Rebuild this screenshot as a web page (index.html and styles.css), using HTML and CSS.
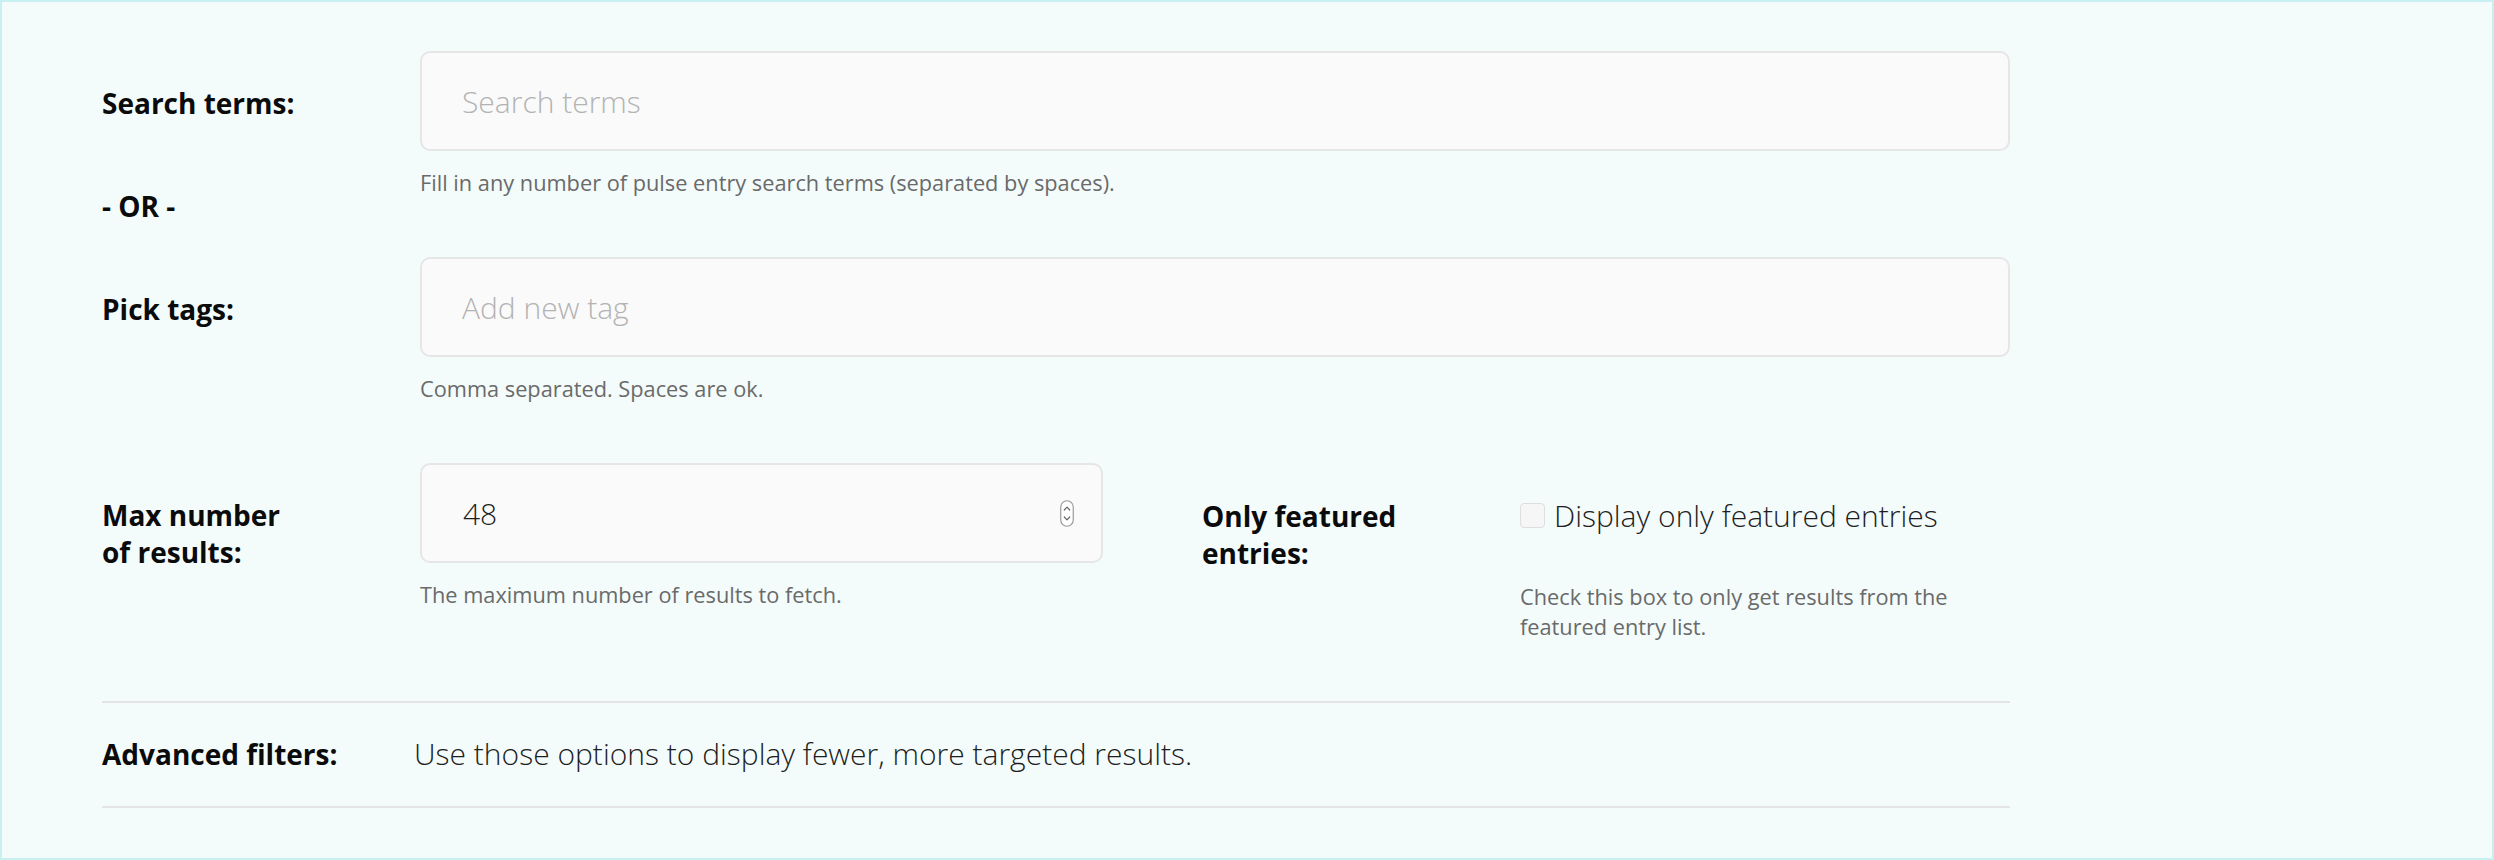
FILE: index.html
```html
<!DOCTYPE html>
<html lang="en">
<head>
<meta charset="utf-8">
<title>Pulse search</title>
<link rel="stylesheet" href="styles.css">
</head>
<body>
<div class="page">
  <form class="form">
    <div class="row">
      <div class="label-col">
        <div class="label">Search terms:</div>
        <div class="label or">- OR -</div>
      </div>
      <div class="field-col">
        <input class="input" type="text" placeholder="Search terms">
        <div class="help">Fill in any number of pulse entry search terms (separated by spaces).</div>
      </div>
    </div>
    <div class="row">
      <div class="label-col">
        <div class="label">Pick tags:</div>
      </div>
      <div class="field-col">
        <input class="input" type="text" placeholder="Add new tag">
        <div class="help">Comma separated. Spaces are ok.</div>
      </div>
    </div>
    <div class="row row-last">
      <div class="label-col">
        <div class="label">Max number<br>of results:</div>
      </div>
      <div class="field-half">
        <div class="numbox">
          <input class="num-input" type="text" value="48">
          <svg class="spinner" width="14" height="27" viewBox="0 0 14 27">
            <rect x="0.75" y="0.75" width="12.5" height="25.5" rx="6.25" fill="#ffffff" stroke="#9a9a9a" stroke-width="1.2"/>
            <path d="M4.3 10 L7 7.2 L9.7 10" fill="none" stroke="#666" stroke-width="1.2" stroke-linecap="round" stroke-linejoin="round"/>
            <path d="M4.3 17 L7 19.8 L9.7 17" fill="none" stroke="#666" stroke-width="1.2" stroke-linecap="round" stroke-linejoin="round"/>
          </svg>
        </div>
        <div class="help">The maximum number of results to fetch.</div>
      </div>
      <div class="label-col label-col-right">
        <div class="label">Only featured<br>entries:</div>
      </div>
      <div class="field-check">
        <label class="check-line"><span class="box"></span>Display only featured entries</label>
        <div class="help help-check">Check this box to only get results from the featured entry list.</div>
      </div>
    </div>
    <div class="adv">
      <div class="label adv-label">Advanced filters:</div>
      <div class="adv-text">Use those options to display fewer, more targeted results.</div>
    </div>
  </form>
</div>
</body>
</html>
```
FILE: styles.css
```css
* { box-sizing: border-box; }
html, body { margin: 0; padding: 0; }
body { font-family: "Open Sans", "Liberation Sans", sans-serif; }

.page {
  height: 860px;
  border: 2px solid #c8eff1;
  background: #f3fcfb;
  padding: 49px 0 0 100px;
  overflow: hidden;
}

.form { width: 1908px; }

.row {
  display: flex;
  align-items: flex-start;
  margin-bottom: 59px;
}

.label-col {
  width: 318px;
  flex: none;
  padding-top: 34px;
}
.label-col-right { margin-left: 99px; padding-top: 35px; }

.label {
  font-weight: 700;
  font-size: 28px;
  line-height: 37.44px;
  color: #0b0b0b;
}
.or { margin-top: 66px; margin-bottom: -300px; }

.field-col { flex: 1; }
.field-half { width: 683px; flex: none; }
.field-check { flex: 1; padding-top: 34px; }

.input, .numbox {
  display: block;
  width: 100%;
  height: 100px;
  border: 2px solid #e6e6e6;
  border-radius: 10px;
  background: #fafafa;
  padding: 0 40px;
  font-family: "Open Sans", sans-serif;
  font-weight: 300;
  font-size: 30px;
  color: #2a2a2a;
  outline: none;
}
.input::placeholder { color: #b3b3b3; opacity: 1; }

.numbox {
  display: flex;
  align-items: center;
  padding: 0 27px 0 41px;
}
.num-input {
  flex: 1;
  min-width: 0;
  border: none;
  background: transparent;
  padding: 0;
  font: inherit;
  color: #1e1e1e;
  outline: none;
}
.spinner { flex: none; display: block; }

.help {
  margin-top: 17px;
  font-size: 21.76px;
  line-height: 30px;
  color: #6a6a6a;
}
.help-check { margin-top: 48px; }

.check-line {
  display: flex;
  align-items: center;
  gap: 9px;
  font-weight: 300;
  font-size: 30px;
  line-height: 37.44px;
  color: #1e1e1e;
}
.box {
  width: 25px;
  height: 25px;
  flex: none;
  border: 1px solid #dedede;
  border-radius: 4px;
  background: #f6f6f6;
}

.adv {
  display: flex;
  align-items: baseline;
  padding: 32px 0 32px;
  border-top: 2px solid #e4e4e4;
  border-bottom: 2px solid #e4e4e4;
}
.adv-label { width: 312px; flex: none; }
.adv-text {
  font-weight: 300;
  font-size: 30px;
  line-height: 37.44px;
  color: #1e1e1e;
}
```
